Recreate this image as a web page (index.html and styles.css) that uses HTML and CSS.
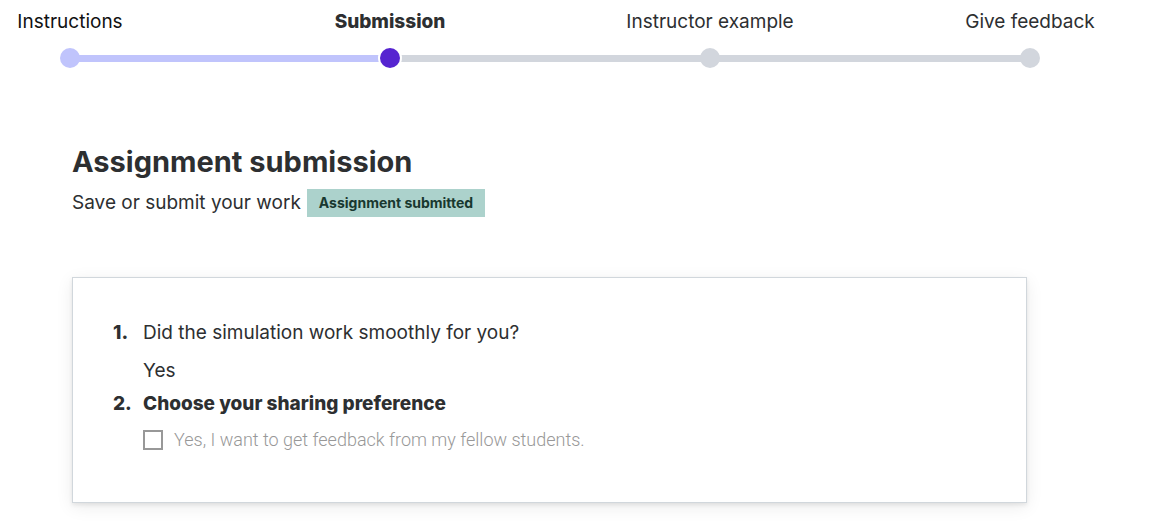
FILE: index.html
```html
<!DOCTYPE html>
<html lang="en">
<head>
<meta charset="utf-8">
<meta name="viewport" content="width=device-width, initial-scale=1">
<title>Assignment submission</title>
<link rel="stylesheet" href="styles.css">
</head>
<body>
<nav class="stepper" aria-label="Progress">
  <ol class="stepper-labels">
    <li class="step step-done">Instructions</li>
    <li class="step step-current" aria-current="step">Submission</li>
    <li class="step">Instructor example</li>
    <li class="step">Give feedback</li>
  </ol>
  <div class="track" aria-hidden="true">
    <span class="dot dot-done"></span>
    <span class="line line-done"></span>
    <span class="dot dot-current"></span>
    <span class="line"></span>
    <span class="dot"></span>
    <span class="line"></span>
    <span class="dot"></span>
  </div>
</nav>
<main class="content">
  <h1 class="title">Assignment submission</h1>
  <div class="status">
    <span>Save or submit your work</span>
    <strong class="badge">Assignment submitted</strong>
  </div>
  <section class="card">
    <div class="question">
      <span class="number">1.</span>
      <div class="question-body">
        <p class="prompt">Did the simulation work smoothly for you?</p>
        <p class="answer">Yes</p>
      </div>
    </div>
    <div class="question">
      <span class="number">2.</span>
      <div class="question-body">
        <p class="prompt prompt-strong">Choose your sharing preference</p>
        <label class="option" for="share">
          <input class="checkbox" type="checkbox" id="share" disabled>
          <span>Yes, I want to get feedback from my fellow students.</span>
        </label>
      </div>
    </div>
  </section>
</main>
</body>
</html>
```
FILE: styles.css
```css
* {
  box-sizing: border-box;
}

body {
  margin: 0;
  background: #fff;
  color: #2d2f31;
  font-family: Inter, "Liberation Sans", sans-serif;
  font-size: 19px;
  line-height: 24px;
}

p,
h1,
ol {
  margin: 0;
  padding: 0;
}

.stepper {
  padding: 10px 70px 0 10px;
}

.stepper-labels {
  display: flex;
  justify-content: space-between;
  list-style: none;
}

.step {
  display: flex;
  justify-content: center;
  width: 120px;
  white-space: nowrap;
}

.step-done {
  color: #111;
}

.step-current {
  font-weight: 800;
}

.track {
  display: flex;
  align-items: center;
  margin: 14px 50px 0;
}

.dot {
  flex: none;
  width: 20px;
  height: 20px;
  border-radius: 50%;
  background: #d2d6dd;
}

.dot-done {
  background: #c0c4fc;
}

.dot-current {
  background: #5624d0;
  box-shadow: 0 0 0 2px #fff;
  z-index: 1;
}

.line {
  flex: 1;
  height: 7px;
  margin: 0 -2px;
  background: #d2d6dd;
}

.line-done {
  background: #c0c4fc;
}

.content {
  padding: 76px 133px 18px 72px;
}

.title {
  font-size: 29px;
  line-height: 36px;
  font-weight: 700;
}

.status {
  display: flex;
  align-items: center;
  gap: 6px;
  margin-top: 9px;
}

.badge {
  padding: 2px 12px;
  background: #acd2cc;
  color: #18382f;
  font-size: 14px;
  font-weight: 700;
}

.card {
  margin-top: 60px;
  padding: 43px 40px 50px;
  border: 1px solid #d1d7dc;
  background: #fff;
  box-shadow: 0 2px 4px rgba(0, 0, 0, 0.08), 0 4px 16px rgba(0, 0, 0, 0.08);
}

.question {
  display: flex;
}

.number {
  flex: none;
  width: 30px;
  font-weight: 800;
}

.answer {
  margin: 14px 0 9px;
}

.prompt-strong {
  font-weight: 800;
}

.option {
  display: flex;
  align-items: center;
  gap: 11px;
  margin-top: 12px;
  color: #989898;
  font-family: Roboto, "Liberation Sans", sans-serif;
  font-size: 18px;
  font-weight: 300;
}

.checkbox {
  appearance: none;
  flex: none;
  width: 20px;
  height: 20px;
  margin: 0;
  border: 2px solid #989898;
  background: #fff;
}
```
